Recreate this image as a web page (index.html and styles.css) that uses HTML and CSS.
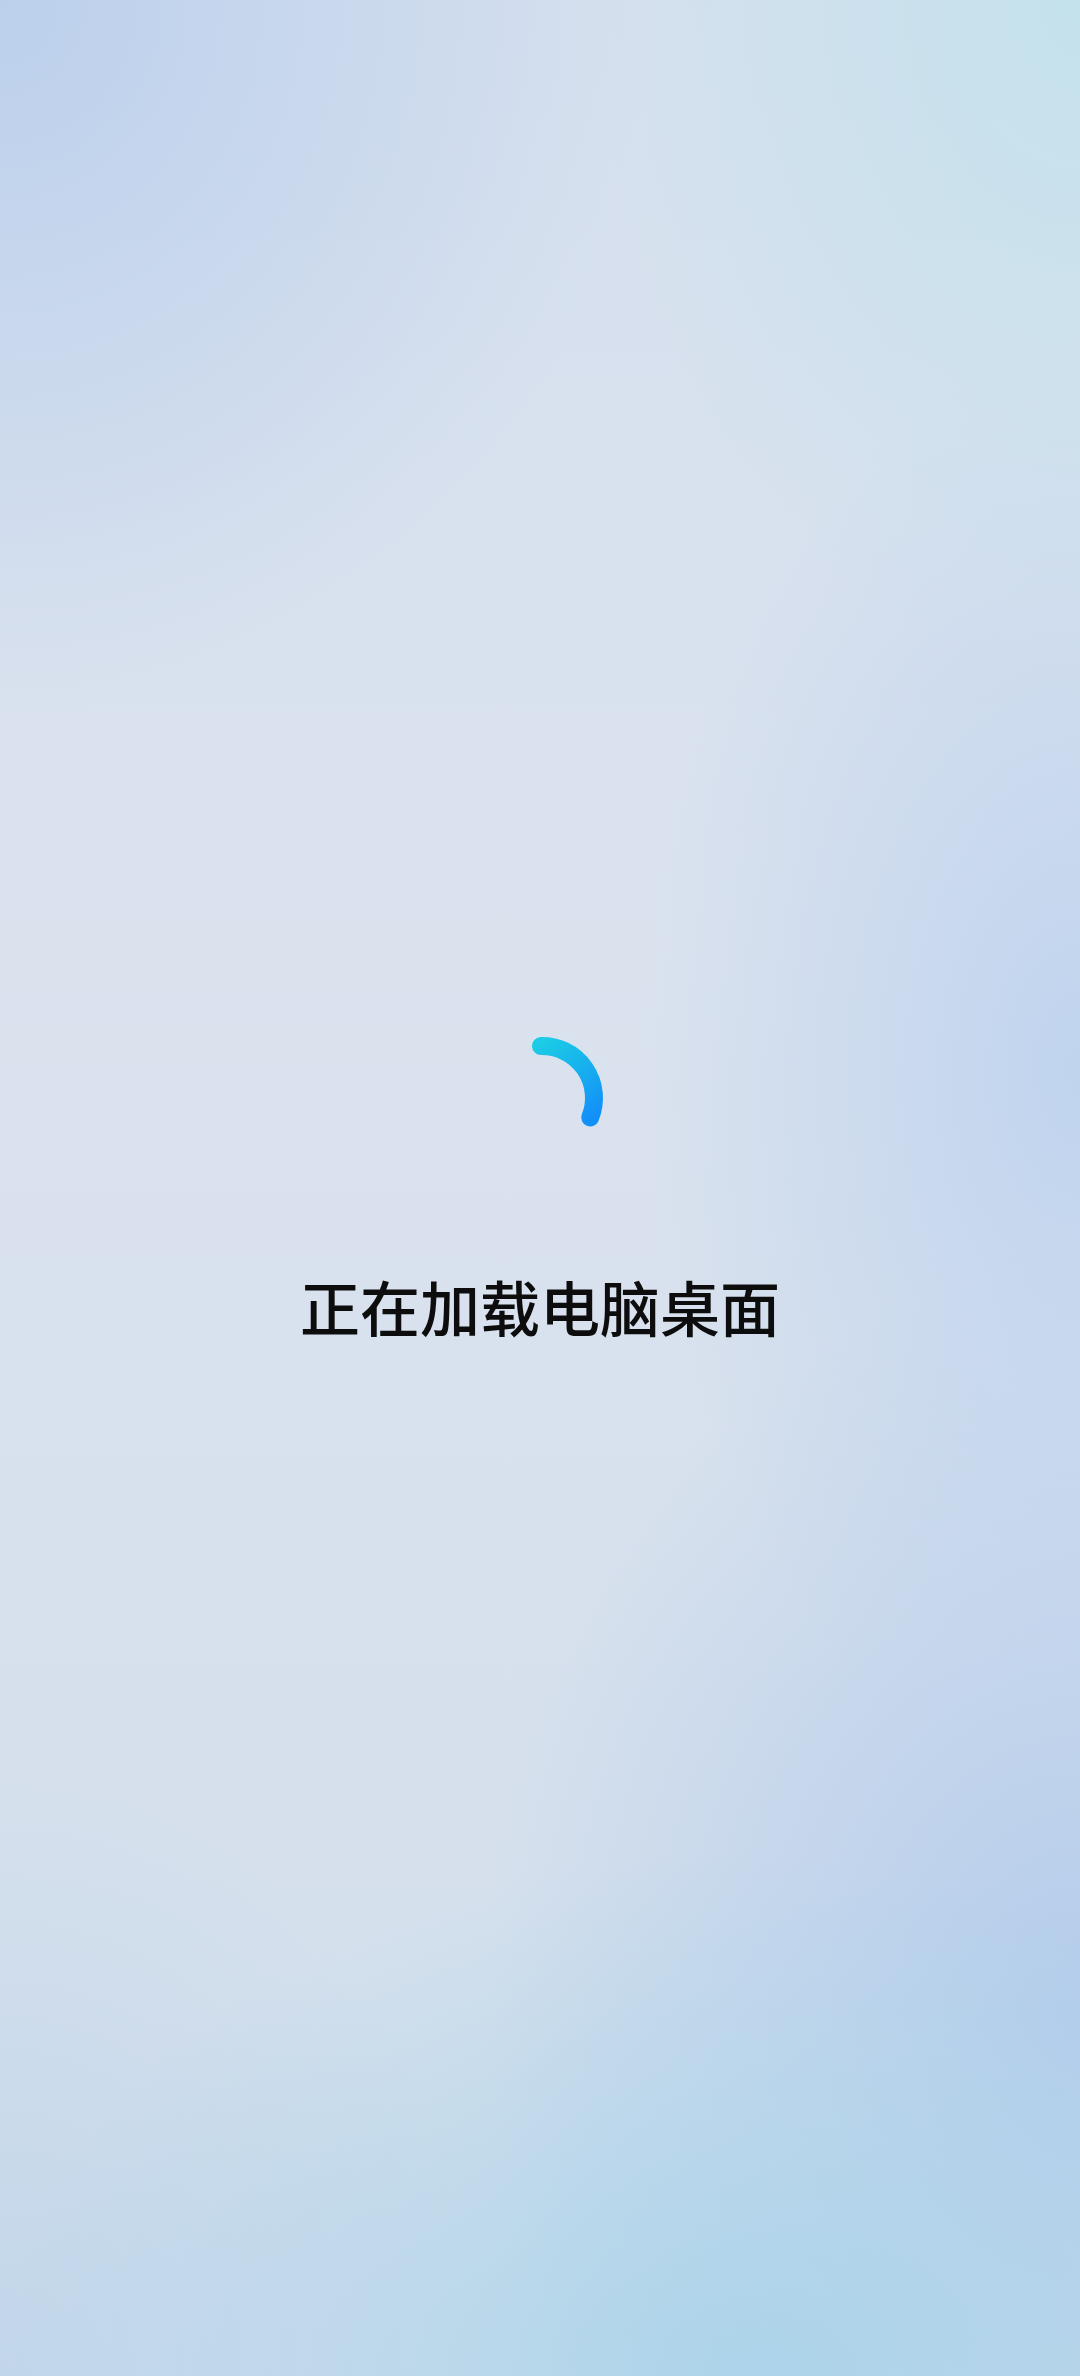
FILE: index.html
```html
<!DOCTYPE html>
<html lang="zh-CN">
<head>
<meta charset="utf-8">
<title>正在加载电脑桌面</title>
<link rel="stylesheet" href="styles.css">
</head>
<body>
<main class="loader">
  <svg class="spinner" width="130" height="130" viewBox="0 0 130 130" aria-hidden="true">
    <defs>
      <linearGradient id="arcGrad" gradientUnits="userSpaceOnUse" x1="60" y1="13" x2="112" y2="86">
        <stop offset="0" stop-color="#1ccbe5"/>
        <stop offset="0.5" stop-color="#17b0ee"/>
        <stop offset="1" stop-color="#1390f8"/>
      </linearGradient>
    </defs>
    <path d="M64 13 A52 52 0 0 1 113.2 84.5" fill="none" stroke="url(#arcGrad)" stroke-width="18" stroke-linecap="round"/>
  </svg>
  <p class="label">正在加载电脑桌面</p>
</main>
</body>
</html>
```
FILE: styles.css
```css
html, body {
  margin: 0;
  padding: 0;
  height: 100%;
}
body {
  min-height: 100vh;
  background-color: #d8e1ee;
  background-image:
    radial-gradient(ellipse 60% 30% at 0% 0%, rgba(188, 208, 236, 1), rgba(188, 208, 236, 0)),
    radial-gradient(ellipse 45% 28% at 100% 0%, rgba(196, 226, 236, 1), rgba(196, 226, 236, 0)),
    radial-gradient(ellipse 40% 30% at 100% 45%, rgba(192, 212, 238, 1), rgba(192, 212, 238, 0)),
    radial-gradient(ellipse 70% 22% at 70% 100%, rgba(172, 212, 234, 1), rgba(172, 212, 234, 0)),
    radial-gradient(ellipse 55% 32% at 100% 85%, rgba(180, 204, 235, 1), rgba(180, 204, 235, 0)),
    radial-gradient(ellipse 45% 25% at 0% 100%, rgba(194, 214, 234, 1), rgba(194, 214, 234, 0)),
    linear-gradient(180deg, #d6e0ee 0%, #dae2ee 40%, #d3dfec 100%);
  font-family: "Noto Sans CJK SC", "Noto Sans", sans-serif;
}
.loader {
  min-height: 100vh;
  box-sizing: border-box;
  padding-top: 2px;
  display: flex;
  flex-direction: column;
  align-items: center;
  justify-content: center;
}
.spinner {
  display: block;
  margin-left: 4px;
}
.label {
  margin: 103px 0 0;
  font-size: 60px;
  line-height: 80px;
  font-weight: 500;
  color: #0d0d0d;
  letter-spacing: 0;
}
```
